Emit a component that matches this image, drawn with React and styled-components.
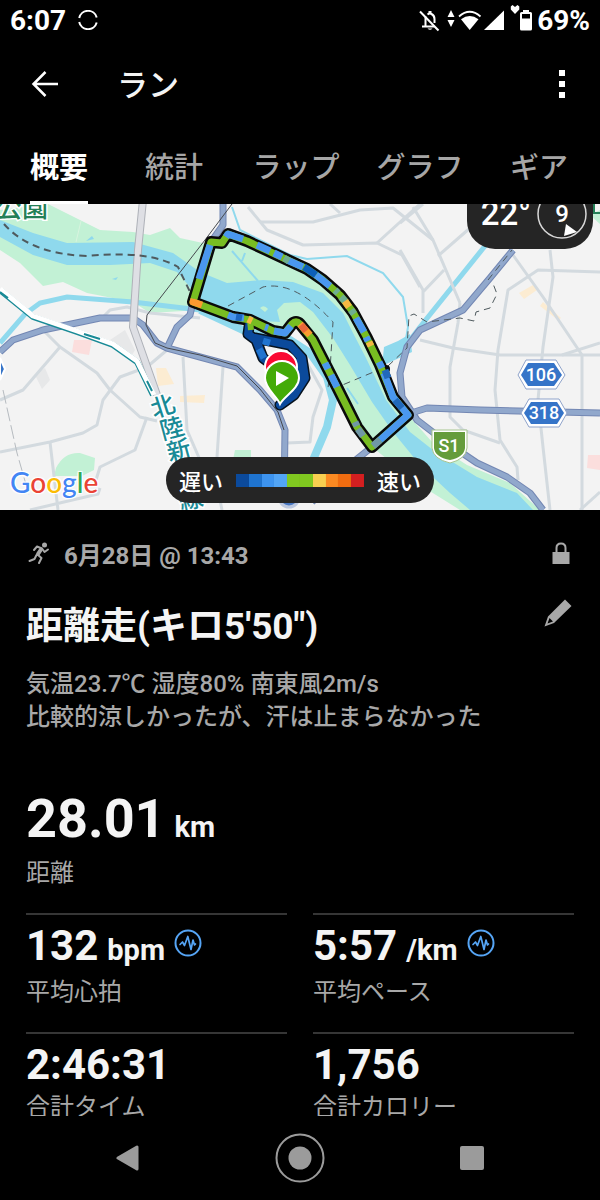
import { useState } from 'react';
import styled, { createGlobalStyle } from 'styled-components';

const TABS = ['概要', '統計', 'ラップ', 'グラフ', 'ギア'];

const PACE_COLORS = [
	'#0b4a9c', '#1f74d0', '#3d94f0', '#52a5f6', '#80c820',
	'#80c820', '#f8cf50', '#fb8a22', '#f06c10', '#d41f20',
];

const STATS = [
	{ value: '132', unit: 'bpm', label: '平均心拍', pulse: true },
	{ value: '5:57', unit: '/km', label: '平均ペース', pulse: true },
	{ value: '2:46:31', label: '合計タイム' },
	{ value: '1,756', label: '合計カロリー' },
];

const LOCAL_ROADS = [
	'M40 327L60 347L97 373L110 390L140 417L157 421',
	'M60 347L23 390L0 400',
	'M167 350L147 367L120 377L103 400L97 425L83 433L50 442L0 452',
	'M147 417L135 450L100 467L96 480',
	'M50 442L58 510M30 510L98 494L100 488',
	'M100 320L110 310L127 307L150 313L200 318',
	'M183 357L187 430L200 460',
	'M223 367L217 457M220 500L222 510',
	'M307 363L322 390L313 417L310 442L287 443',
	'M260 222L313 222L360 210L393 208L433 240',
	'M248 207L267 230L303 245L377 243L402 255L420 287',
	'M377 243L420 204M330 204L340 213',
	'M513 255L543 297L582 355L582 510',
	'M600 272L538 270L508 290L498 350L495 390L500 440L517 467L518 480',
	'M550 250L553 277L543 347L538 400L543 447L550 510',
	'M420 340L453 348L500 355L600 355',
	'M562 355L600 343',
	'M460 303L458 323L450 367L450 417L463 430L500 443',
	'M413 207L433 240L460 303',
	'M400 250L423 290L423 313M423 292L444 270M438 256L470 228',
	'M400 223L423 204',
	'M580 510L600 492',
];

const HIGHWAYS = [
	'M0 352L13 340L43 330L100 318L133 318L143 325L157 343L167 348L200 357L237 367L260 390L277 410L285 430L284 500',
	'M167 348L177 327L190 315L193 302L211 242L223 225L223 200',
	'M513 250L490 278L463 310L420 330L407 347L400 373L402 397L417 420L443 440L477 463L507 477L530 493L543 510',
	'M408 414L427 408L480 410L600 413',
	'M372 447L347 467L312 502',
];

const ROUTE = 'M211 242L222 243L228 234L247 241L277 255L307 269L323 280L340 295L353 312L367 338L380 365L393 397L408 415L372 447L357 427L337 387L313 340L300 324Q296 320 292 324L285 333L273 331L250 320L233 317L193 302Z';
const WARMUP = 'M250 320L248 334L256 340L263 358L274 366M255 338L290 345L302 358L305 378L294 395L280 405M299 362L301 376L292 392';

// pace stretches painted over the green base of the route
const STRETCHES = [
	['#4a97ef', 'M226 237L228 234L243 239'],
	['#4a97ef', 'M257 245L270 251M274 253L282 257M287 260L303 267'],
	['#0d5fb8', 'M304 267L316 275'],
	['#4a97ef', 'M316 275L330 286'],
	['#6fae90', 'M284 258L289 261M335 290L338 293M341 297L346 302M351 310L354 314'],
	['#f6b743', 'M345 301L349 307M369 342L371 346'],
	['#4a97ef', 'M356 318L364 332M366 337L368 341M379 362L382 368'],
	['#4a97ef', 'M384 373L393 397L408 415L380 440'],
	['#2168bb', 'M385 370L388 378M395 400L402 408'],
	['#7097a5', 'M373 446L380 440M358 429L363 436M355 422L357 426'],
	['#4a97ef', 'M337 387L331 375M328 369L325 363'],
	['#fb9a30', 'M310 335L300 324'],
	['#e9673a', 'M306 331L301 325'],
	['#4a97ef', 'M291 326L285 333L274 331M265 327L268 328'],
	['#f6b743', 'M248 319L252 321'],
	['#4a97ef', 'M244 318L233 317L228 315'],
	['#1c66c0', 'M242 318L236 317'],
	['#fb9a30', 'M202 305L193 302L194 299'],
	['#4a97ef', 'M199 279L210 245'],
];

function RouteMap() {
	return (
		<MapCanvas viewBox="0 204 600 306" preserveAspectRatio="xMidYMid slice" aria-label="ルート">
			<rect x="-600" y="204" width="1800" height="306" fill="#f3f3f3" />
			<g fill="#c2f1d5">
				<path d="M0 210L48 204L70 215L100 230L133 232L150 235L170 228L180 238L212 245L200 310L150 313L133 302L87 293L63 282L43 286L20 263L0 250Z" />
				<path d={ROUTE} />
				<path d="M372 447L408 415L433 443L467 465L510 483L540 510L460 510L420 485Z" />
				<path d="M56 468Q64 452 80 453L95 458L94 470L82 476L54 476ZM235 450H251V460H233Z" />
				<path d="M590 215L600 224V210Z" />
			</g>
			<path d="M44 306L60 300L100 306L128 318L100 322Z" fill="#f3f3f3" />
			<path d="M110 340L125 330L135 350L130 358ZM35 375L45 368L50 380L42 389Z" fill="#e7e8e9" />
			<path d="M74 340L92 340L89 355L72 352ZM588 455L600 455V470L587 468Z" fill="#fbdedd" />
			<path d="M156 368L166 368L174 384L158 386ZM519 293L533 285L537 290L524 299ZM543 302L561 318L558 320L540 306ZM180 396L205 395L204 403L180 402Z" fill="#fcecd2" />
			<g fill="#8fd9ed">
				<path d="M0 220L33 233L67 243L133 242L173 253L200 272L227 283L263 280L293 282L323 293L343 313L353 333L366 358L386 400L410 432L433 450L477 477L517 493L533 510L470 510L450 493L420 465L393 432L372 402L350 365L333 338L313 312L300 302L284 303L277 310L280 322L262 321L240 313L200 300L190 287L177 272L150 263L110 265L67 265L33 255L0 237Z" />
				<path d="M86 241L92 236L94 239ZM112 279L118 277L116 280Z" />
				<path d="M384 347L398 341L410 334L412 352L382 366Z" />
			</g>
			<path d="M260 308Q264 304 268 309L265 312Z" fill="#c2f1d5" />
			<g fill="none" stroke="#8fd9ed">
				<path d="M0 343L25 314L40 303L67 297L133 302L200 310" strokeWidth="5" />
				<path d="M200 310L247 332L290 340L310 353L327 377L333 400L327 427L313 460" strokeWidth="8" />
				<path d="M489 241L420 327L398 356" strokeWidth="5" />
				<path d="M232 207L240 230L290 255L307 259L347 256L383 273L403 297L408 327L405 345" strokeWidth="2" />
				<path d="M232 251L258 281M245 253L242 261M347 388L358 404" strokeWidth="2" />
			</g>
			<path d="M76 242L81 221" stroke="#d8f4df" strokeWidth="1" />
			<g fill="none" stroke="#d3dadf" strokeWidth="3" strokeLinejoin="round">
				{LOCAL_ROADS.map((d) => <path key={d} d={d} />)}
			</g>
			<g fill="none" strokeLinejoin="round">
				{HIGHWAYS.map((d) => <path key={d} d={d} stroke="#7387b3" strokeWidth="7" />)}
				{HIGHWAYS.map((d) => <path key={d} d={d} stroke="#91a8cc" strokeWidth="5" />)}
				<path d="M143 200L138 250L133 327L157 395" stroke="#aeb1b8" strokeWidth="8" />
				<path d="M143 200L138 250L133 327L157 395" stroke="#dedfe4" strokeWidth="6" />
				<path d="M0 290L33 317L77 332L113 345L137 362L153 395" stroke="#188a96" strokeWidth="6" />
				<path d="M0 289L33 316L77 331L113 344L137 361L154 395" stroke="#fff" strokeWidth="5" />
				<path d="M0 292L8 298M84 334L100 339M147 381L152 391" stroke="#188a96" strokeWidth="2" />
				<path d="M232 204L205 240L147 315L146 325L155 343L167 348L200 355L237 366L260 389L278 412L284 430" stroke="#45484e" strokeWidth="1" />
				<path d="M3 390L17 453L29 495" stroke="#b6bbc0" strokeWidth="1" strokeDasharray="14 4" />
			</g>
			<g fill="none" stroke="#4f5a5e" strokeDasharray="7 5">
				<path d="M4 224Q30 254 87 256Q150 250 178 267L191 294" strokeWidth="2" />
				<path d="M228 306L263 287Q295 280 333 322L330 370L328 388L340 386L388 366L407 348L409 316L414 314L427 322L460 318L474 321L476 312L490 308L497 294L492 281" strokeWidth="1" />
				<path d="M488 280L512 250" strokeWidth="1" />
			</g>
			<circle cx="289" cy="497" r="10" fill="#4776c0" stroke="#bcc8e0" strokeWidth="3" />

			<g fill="none" strokeLinejoin="round" strokeLinecap="round">
				<path d={WARMUP} stroke="#08131e" strokeWidth="11" />
				<path d={ROUTE} stroke="#0a0a0a" strokeWidth="12" />
				<circle cx="386" cy="369" r="4" fill="#0a0a0a" />
				<path d={WARMUP} stroke="#0b4a9c" strokeWidth="8" />
				<path d="M259 349L264 358M263 341L270 343" stroke="#1f74d0" strokeWidth="7" strokeLinecap="butt" />
			</g>
			<path d={ROUTE} fill="none" stroke="#78bd22" strokeWidth="7" strokeLinejoin="round" />
			<path d="M250 320L251 330" stroke="#78bd22" strokeWidth="6" />
			<g fill="none" strokeWidth="7" strokeLinejoin="round">
				{STRETCHES.map(([color, d]) => <path key={d} d={d} stroke={color} />)}
			</g>

			<g stroke="#fff" strokeWidth="2">
				<circle cx="281" cy="367" r="16" fill="#fa0932" />
				<path d="M280 404C277 396 265 389 265 378A17 17 0 0 1 299 378C299 389 284 396 280 404Z" fill="#43ab07" />
			</g>
			<path d="M276 371L289 378L276 386Z" fill="#fff" />

			<g strokeLinejoin="round">
				<path d="M518 375L526 360H556L565 375L556 389H526Z" fill="#fff" stroke="#8fa3ca" strokeWidth="1" />
				<path d="M521 375L528 363H554L562 375L554 386H528Z" fill="#3574c8" />
				<path d="M521 413L529 399H559L567 413L559 427H529Z" fill="#fff" stroke="#8fa3ca" strokeWidth="1" />
				<path d="M524 413L531 402H557L564 413L557 424H531Z" fill="#3574c8" />
				<path d="M432 430H467V448Q466 459 450 463Q433 459 432 448Z" fill="#fff" stroke="#a6c48e" strokeWidth="1" />
				<path d="M434 432H465V448Q464 457 450 460Q435 457 434 448Z" fill="#659c3b" />
			</g>
			<ShieldText x="541" y="381">106</ShieldText>
			<ShieldText x="544" y="419">318</ShieldText>
			<ShieldText x="449" y="452">S1</ShieldText>

			<ParkText x="-4" y="217">公園</ParkText>
			<RailText>
				<text transform="translate(163 407) rotate(-18)">北</text>
				<text transform="translate(172 429) rotate(-15)">陸</text>
				<text transform="translate(179 451) rotate(-15)">新</text>
				<text transform="translate(186 475) rotate(-15)">幹</text>
				<text transform="translate(191 500) rotate(-12)">線</text>
			</RailText>
			<path d="M594 204V213H600" fill="none" stroke="#248057" strokeWidth="2" />
			<path d="M0 358L5 369L0 380Z" fill="#3574c8" stroke="#fff" strokeWidth="2" />
		</MapCanvas>
	);
}

function PulseIcon() {
	return (
		<svg width="28" height="28" viewBox="0 0 28 28" fill="none" stroke="#56a5f5" strokeLinejoin="round" strokeLinecap="round">
			<circle cx="14" cy="14" r="12.5" strokeWidth="2" />
			<path d="M6 15.500L8.500 13L10.500 16.500L13.800 7.500L17 20.500L19 11L20.500 16L21.500 15" strokeWidth="1.700" />
		</svg>
	);
}

function StatusIcons() {
	return (
		<svg width="116" height="30" viewBox="418 4 116 30" fill="#fff" role="img" aria-label="通知オフ Wi-Fi 電波 電池">
			<g fill="none" stroke="#fff" strokeWidth="2">
				<path d="M422 25.500H434.500M425.500 25V15.500M427.500 13.500Q429.500 12 431.500 13Q434.500 14.500 434.500 18V22" />
				<path d="M420 10.500L438.500 29.500" />
			</g>
			<path d="M428.500 12V10H431.500V12.500ZM427.500 27.500H432.500Q430 30 427.500 27.500Z" />
			<path d="M451 9L454.500 16H447.500ZM451 26L454.500 19H447.500Z" />
			<path d="M469.700 29L461 18.300Q469.700 11.500 478.500 18.300Z" />
			<path d="M459 15.500Q469.700 6 480.500 15.500" fill="none" stroke="#fff" strokeWidth="1.800" />
			<path d="M484 29H504V9.500Z" />
			<path d="M515 13L510.800 8.500V5.500L512.500 4L515 6L517.500 4L519.300 5.500V8.500Z" />
			<path d="M523 11V9H529V11H530.500Q532 11 532 12.500V28Q532 29.500 530.500 29.500H521.500Q520 29.500 520 28V12.500Q520 11 521.500 11ZM522 13V17.500H530V13Z" fillRule="evenodd" />
		</svg>
	);
}

export default function App() {
	const [tab, setTab] = useState(0);

	return (
		<Screen>
			<GlobalStyle />
			<StatusBar>
				<span>6:07</span>
				<svg width="20" height="20" viewBox="0 0 20 20" fill="none" stroke="#fff" strokeWidth="2">
					<path d="M1.200 8A9 9 0 0 1 18.700 7.500M1.200 12A9 9 0 0 0 18.700 12.500" />
				</svg>
				<StatusRight>
					<StatusIcons />
					<span>69%</span>
				</StatusRight>
			</StatusBar>

			<AppBar>
				<IconButton aria-label="戻る">
					<svg width="28" height="28" viewBox="0 0 28 28" fill="none" stroke="#fff" strokeWidth="2.500">
						<path d="M14.500 2L2.500 14L14.500 26M2.500 14H27" />
					</svg>
				</IconButton>
				<h1>ラン</h1>
				<IconButton aria-label="メニュー">
					<svg width="8" height="30" viewBox="0 0 8 30" fill="#fff">
						<path d="M1 1H7V7H1ZM1 12H7V18H1ZM1 23H7V29H1Z" />
					</svg>
				</IconButton>
			</AppBar>

			<Tabs>
				{TABS.map((name, index) => (
					<Tab key={name} $active={index === tab} onClick={() => setTab(index)}>
						<span>{name}</span>
					</Tab>
				))}
			</Tabs>

			<Content>
				<MapArea>
					<RouteMap />
					<Weather>
						<span>22°</span>
						<Wind>
							<svg width="50" height="50" viewBox="0 0 50 50">
								<circle cx="25" cy="25" r="24" fill="none" stroke="#d8d8d8" strokeWidth="1.500" />
								<path d="M29 35L27 47L40 43Z" fill="#fff" />
							</svg>
							<b>9</b>
						</Wind>
					</Weather>
					<Google aria-label="Google">
						<Letter $color="#4285f4">G</Letter>
						<Letter $color="#ea4335">o</Letter>
						<Letter $color="#fbbc05">o</Letter>
						<Letter $color="#4285f4">g</Letter>
						<Letter $color="#34a853">l</Letter>
						<Letter $color="#ea4335">e</Letter>
					</Google>
					<Legend>
						<span>遅い</span>
						<PaceBar>
							{PACE_COLORS.map((color, index) => <PaceCell key={index} $color={color} />)}
						</PaceBar>
						<span>速い</span>
					</Legend>
				</MapArea>

				<Summary>
					<DateRow>
						<svg width="24" height="24" viewBox="0 0 24 24" fill="none" stroke="#a8a8a8" strokeLinecap="round" strokeLinejoin="round">
							<circle cx="18.500" cy="4" r="2.500" fill="#a8a8a8" stroke="none" />
							<path d="M8 9L11 5.500L16 7.500L18.500 11L22 8.500" strokeWidth="2" />
							<path d="M15 8.500L12 13" strokeWidth="4" />
							<path d="M12 14L15.500 17L13 22M10.500 14L8.500 18L3.500 20" strokeWidth="2" />
						</svg>
						<time>6月28日 @ 13:43</time>
						<svg width="18" height="24" viewBox="0 0 18 24">
							<path d="M0.500 11H17.500V23H0.500Z" fill="#a8a8a8" />
							<path d="M4.500 12V7Q4.500 2.500 9 2.500Q13.500 2.500 13.500 7V12" fill="none" stroke="#a8a8a8" strokeWidth="2" />
						</svg>
					</DateRow>
					<TitleRow>
						<h2>距離走(キロ5'50")</h2>
						<IconButton aria-label="編集">
							<svg width="28" height="28" viewBox="0 0 28 28" fill="#a8a8a8">
								<path d="M21 0.500L27.500 7L10 24L0.500 27.500L4 17.500ZM5.500 19L3.500 24.500L9 22.500Z" fillRule="evenodd" />
							</svg>
						</IconButton>
					</TitleRow>
					<Note>
						気温23.7℃ 湿度80% 南東風2m/s<br />
						比較的涼しかったが、汗は止まらなかった
					</Note>
					<Distance>
						<p>28.01<Unit>km</Unit></p>
						<StatLabel>距離</StatLabel>
					</Distance>
					<StatGrid>
						{STATS.map((stat) => (
							<Stat key={stat.label}>
								<StatValue>
									<span>{stat.value}{stat.unit && <Unit>{stat.unit}</Unit>}</span>
									{stat.pulse && <PulseIcon />}
								</StatValue>
								<StatLabel>{stat.label}</StatLabel>
							</Stat>
						))}
					</StatGrid>
				</Summary>
			</Content>

			<NavBar>
				<IconButton aria-label="前の画面">
					<svg width="24" height="28" viewBox="0 0 24 28">
						<path d="M2 14L21 3V25Z" fill="#9b9b9b" stroke="#9b9b9b" strokeWidth="3" strokeLinejoin="round" />
					</svg>
				</IconButton>
				<IconButton aria-label="ホーム">
					<svg width="50" height="50" viewBox="0 0 50 50">
						<circle cx="25" cy="25" r="23.500" fill="none" stroke="#9b9b9b" strokeWidth="2" />
						<circle cx="25" cy="25" r="11.500" fill="#9b9b9b" />
					</svg>
				</IconButton>
				<IconButton aria-label="アプリ一覧">
					<svg width="24" height="24" viewBox="0 0 24 24">
						<rect width="24" height="24" rx="2" fill="#9b9b9b" />
					</svg>
				</IconButton>
			</NavBar>
		</Screen>
	);
}

const GlobalStyle = createGlobalStyle`
	* { box-sizing: border-box; }
	body {
		margin: 0;
		background: #000;
		font-family: Roboto, "Noto Sans CJK JP", sans-serif;
	}
	h1, h2, p { margin: 0; font-weight: 500; }
	svg { display: block; flex: none; }
`;

const Screen = styled.div`
	display: flex;
	flex-direction: column;
	height: 100vh;
	background: #000;
	color: #f4f4f4;
`;

const StatusBar = styled.header`
	display: flex;
	align-items: center;
	gap: 12px;
	height: 40px;
	padding: 0 10px;
	color: #fff;
	font-size: 28px;
	font-weight: 700;
`;

const StatusRight = styled.div`
	display: flex;
	align-items: center;
	gap: 3px;
	margin-left: auto;
`;

const IconButton = styled.button`
	display: flex;
	align-items: center;
	justify-content: center;
	padding: 0;
	border: 0;
	background: none;
	cursor: pointer;
`;

const AppBar = styled.div`
	display: flex;
	align-items: center;
	height: 88px;
	padding: 0 34px 0 31px;

	h1 {
		flex: 1;
		padding: 4px 0 0 58px;
		font-size: 31px;
		line-height: 40px;
	}
`;

const Tabs = styled.nav`
	display: grid;
	grid-template-columns: 118fr 112fr 132fr 116fr 122fr;
	height: 76px;
`;

const Tab = styled.button`
	display: flex;
	justify-content: center;
	padding: 0;
	border: 0;
	background: none;
	color: ${(props) => (props.$active ? '#fff' : '#a6a6a6')};
	font-family: inherit;
	font-size: 29px;
	font-weight: ${(props) => (props.$active ? 700 : 500)};
	line-height: 65px;
	cursor: pointer;

	span {
		height: 76px;
		padding-top: 8px;
		border-bottom: 3px solid ${(props) => (props.$active ? '#fff' : 'transparent')};
	}
`;

const Content = styled.main`
	flex: 1;
	min-height: 0;
	overflow: hidden;
`;

const MapArea = styled.section`
	position: relative;
	height: 306px;
	overflow: hidden;
`;

const MapCanvas = styled.svg`
	width: 100%;
	height: 100%;
`;

const ShieldText = styled.text`
	fill: #fff;
	font-size: 18px;
	font-weight: 500;
	text-anchor: middle;
`;

const ParkText = styled.text`
	fill: #248057;
	stroke: #fff;
	stroke-width: 3px;
	paint-order: stroke;
	font-size: 26px;
	font-weight: 500;
`;

const RailText = styled.g`
	fill: #188a96;
	stroke: #fff;
	stroke-width: 3px;
	paint-order: stroke;
	font-size: 24px;
	font-weight: 500;
	text-anchor: middle;
	dominant-baseline: central;
`;

const Weather = styled.div`
	position: absolute;
	top: -26px;
	right: 7px;
	display: flex;
	align-items: center;
	gap: 6px;
	height: 71px;
	padding: 0 6px 0 14px;
	border-radius: 28px;
	background: #252525;
	color: #fff;
	font-size: 33px;
	font-weight: 500;
`;

const Wind = styled.div`
	display: grid;
	place-items: center;

	svg, b {
		grid-area: 1 / 1;
	}

	b {
		font-size: 24px;
		font-weight: 500;
	}
`;

const Google = styled.div`
	position: absolute;
	left: 10px;
	bottom: 10px;
	font-family: Lato, sans-serif;
	font-size: 28px;
	font-weight: 500;
	line-height: 36px;
	text-shadow: 1px 1px 1px #fff, -1px -1px 1px #fff, 1px -1px 1px #fff, -1px 1px 1px #fff;
`;

const Letter = styled.span`
	color: ${(props) => props.$color};
`;

const Legend = styled.div`
	position: absolute;
	left: 50%;
	bottom: 7px;
	transform: translateX(-50%);
	display: flex;
	align-items: center;
	gap: 13px;
	height: 46px;
	padding: 0 13px;
	border-radius: 23px;
	background: #252525;
	color: #fff;
	font-size: 22px;
	font-weight: 500;
	white-space: nowrap;
`;

const PaceBar = styled.div`
	display: flex;
	width: 128px;
	height: 13px;
`;

const PaceCell = styled.i`
	flex: 1;
	background: ${(props) => props.$color};
`;

const Summary = styled.section`
	padding: 25px 26px 0;
`;

const DateRow = styled.div`
	display: flex;
	align-items: center;
	height: 36px;
	padding-right: 4px;
	color: #a8a8a8;
	font-size: 24px;
	font-weight: 700;

	time {
		flex: 1;
		padding-left: 14px;
	}
`;

const TitleRow = styled.div`
	display: flex;
	justify-content: space-between;
	align-items: flex-start;
	padding: 28px 2px 0 0;

	h2 {
		font-size: 37px;
		font-weight: 700;
		line-height: 56px;
	}
`;

const Note = styled.p`
	padding-top: 13px;
	color: #a8a8a8;
	font-size: 24px;
	line-height: 33px;
`;

const Distance = styled.div`
	padding: 56px 0 23px;

	p {
		font-size: 54px;
		font-weight: 700;
		line-height: 58px;
	}
`;

const Unit = styled.small`
	margin-left: 9px;
	font-size: 29px;
	font-weight: 700;
`;

const StatLabel = styled.div`
	color: #a8a8a8;
	font-size: 24px;
	line-height: 34px;
`;

const StatGrid = styled.div`
	display: grid;
	grid-template-columns: 1fr 1fr;
	column-gap: 26px;
`;

const Stat = styled.div`
	height: 119px;
	padding-top: 6px;
	border-top: 2px solid #363636;
`;

const StatValue = styled.div`
	display: flex;
	align-items: flex-start;
	gap: 9px;
	font-size: 42px;
	font-weight: 700;
	line-height: 50px;

	svg {
		margin-top: 8px;
	}
`;

const NavBar = styled.nav`
	display: grid;
	grid-template-columns: repeat(3, 1fr);
	height: 84px;
	padding: 0 42px;
`;
